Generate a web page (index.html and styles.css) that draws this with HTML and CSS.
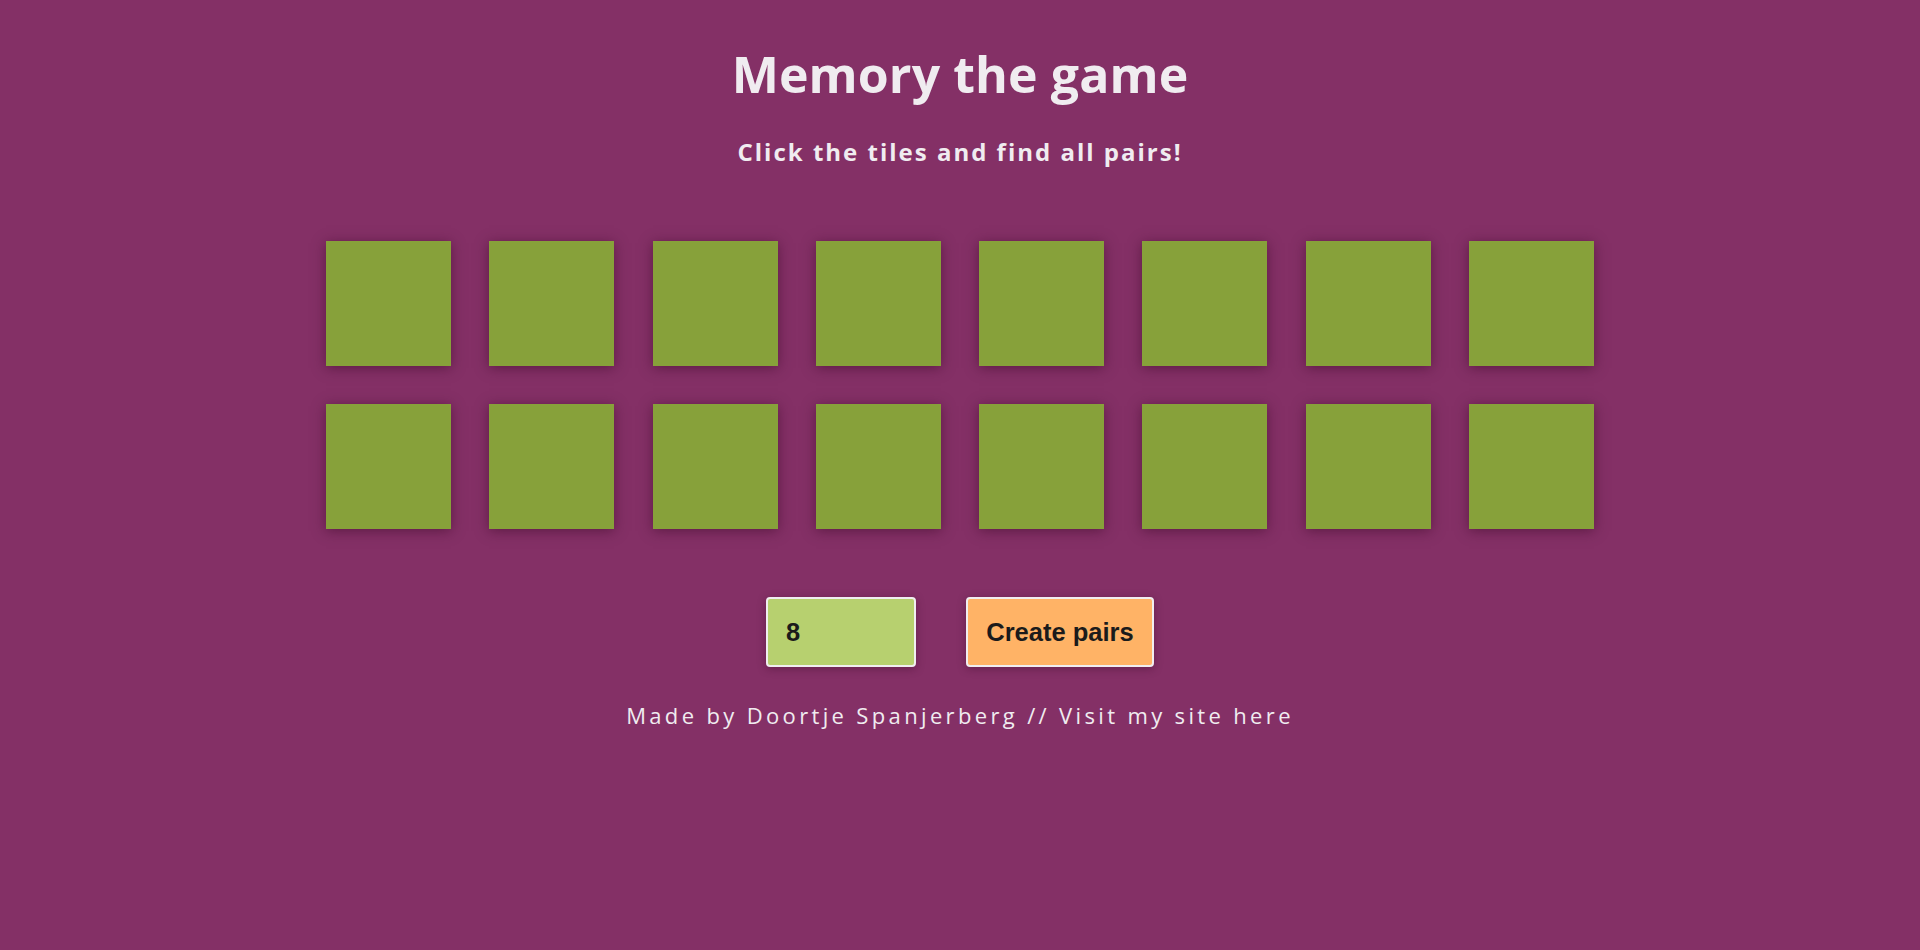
FILE: index.html
```html
<!DOCTYPE html>
<html>
<head>
<meta charset="utf-8">
<title>Memory the game</title>
<link rel="stylesheet" href="styles.css">
</head>
<body>
<main class="page">
  <h1 class="title">Memory the game</h1>
  <p class="subtitle">Click the tiles and find all pairs!</p>
  <div class="board">
    <div class="tile"></div><div class="tile"></div><div class="tile"></div><div class="tile"></div>
    <div class="tile"></div><div class="tile"></div><div class="tile"></div><div class="tile"></div>
    <div class="tile"></div><div class="tile"></div><div class="tile"></div><div class="tile"></div>
    <div class="tile"></div><div class="tile"></div><div class="tile"></div><div class="tile"></div>
  </div>
  <div class="controls">
    <input class="pairs-input" type="text" value="8">
    <button class="create-btn">Create pairs</button>
  </div>
  <p class="footer">Made by Doortje Spanjerberg // Visit my site here</p>
</main>
</body>
</html>
```
FILE: styles.css
```css
html, body {
  margin: 0;
  padding: 0;
  background: #843066;
  height: 100%;
}
.page {
  display: flex;
  flex-direction: column;
  align-items: center;
  font-family: "Open Sans", "DejaVu Sans", sans-serif;
  color: #f0ecf0;
}
.title {
  margin: 38px 0 0;
  font-size: 50px;
  font-weight: 700;
  line-height: 72px;
  letter-spacing: 0.1px;
}
.subtitle {
  margin: 26px 0 0;
  font-size: 24px;
  font-weight: 700;
  line-height: 32px;
  letter-spacing: 2px;
}
.board {
  margin-top: 73px;
  display: grid;
  grid-template-columns: repeat(8, 125px);
  column-gap: 38.3px;
  row-gap: 38px;
}
.tile {
  width: 125px;
  height: 125px;
  background: #87a13a;
  box-shadow: 0 2px 12px rgba(60, 10, 40, 0.55);
}
.controls {
  margin-top: 68px;
  display: flex;
  gap: 50px;
}
.pairs-input, .create-btn {
  box-sizing: border-box;
  height: 70px;
  border: 2px solid #f0eef0;
  border-radius: 4px;
  font-family: "Liberation Sans", Arial, sans-serif;
  font-weight: 700;
  font-size: 25.5px;
  color: #1b1b1b;
  box-shadow: 0 2px 8px rgba(60, 10, 40, 0.4);
}
.pairs-input {
  width: 150px;
  background: #b7d06f;
  padding: 0 0 0 18px;
  outline: none;
}
.create-btn {
  width: 188px;
  background: #ffb366;
  padding: 0;
}
.footer {
  margin: 33px 0 0;
  font-size: 22px;
  line-height: 30px;
  letter-spacing: 3.35px;
  font-weight: 400;
}
```
